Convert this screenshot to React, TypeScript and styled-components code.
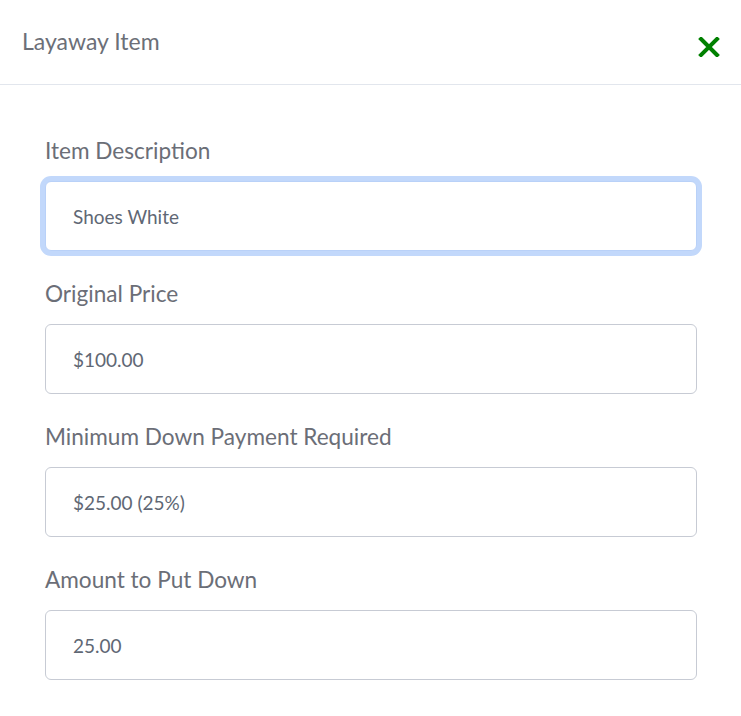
import styled, { createGlobalStyle } from "styled-components";

const GlobalStyle = createGlobalStyle`
  html, body {
    margin: 0;
    padding: 0;
    background: #ffffff;
  }

  * {
    box-sizing: border-box;
  }
`;

const Modal = styled.div`
  width: 741px;
  min-height: 716px;
  background: #ffffff;
  font-family: Lato, "Noto Sans", sans-serif;
`;

const Header = styled.header`
  height: 85px;
  display: flex;
  align-items: center;
  justify-content: space-between;
  padding: 0 20px 0 22px;
  border-bottom: 1px solid #e2e6ed;
`;

const Title = styled.h1`
  margin: 0 0 2px;
  font-size: 23px;
  font-weight: 400;
  color: #6c6f78;
`;

const CloseButton = styled.button`
  display: flex;
  align-items: center;
  justify-content: center;
  width: 24px;
  height: 24px;
  margin-top: 10px;
  padding: 0;
  border: none;
  background: none;
  cursor: pointer;
`;

const Body = styled.form`
  display: flex;
  flex-direction: column;
  gap: 28px;
  padding: 51px 44px 36px 45px;
`;

const Field = styled.div`
  display: flex;
  flex-direction: column;
  gap: 15px;
`;

const Label = styled.label`
  font-size: 22.6px;
  line-height: 30px;
  color: #6b6e77;
`;

const Input = styled.input<{ $focused?: boolean }>`
  width: 100%;
  height: 70px;
  padding: 0 27px;
  font: inherit;
  font-size: 19px;
  color: #606774;
  background: #ffffff;
  border: 1px solid ${(p) => (p.$focused ? "#b9d1f8" : "#c7cbd4")};
  border-radius: 6px;
  box-shadow: ${(p) => (p.$focused ? "0 0 0 5px #c2d8fb" : "none")};
  outline: none;
`;

const fields = [
  { id: "desc", label: "Item Description", value: "Shoes White", focused: true },
  { id: "price", label: "Original Price", value: "$100.00" },
  { id: "min", label: "Minimum Down Payment Required", value: "$25.00 (25%)" },
  { id: "down", label: "Amount to Put Down", value: "25.00" },
];

export default function App() {
  return (
    <>
      <GlobalStyle />
      <Modal>
        <Header>
          <Title>Layaway Item</Title>
          <CloseButton type="button" aria-label="Close">
            <svg width="22" height="20" viewBox="0 0 22 20">
              <path
                d="M3 2 L19 18 M19 2 L3 18"
                stroke="#008000"
                strokeWidth="4"
                strokeLinecap="square"
              />
            </svg>
          </CloseButton>
        </Header>
        <Body>
          {fields.map((f) => (
            <Field key={f.id}>
              <Label htmlFor={f.id}>{f.label}</Label>
              <Input id={f.id} defaultValue={f.value} $focused={f.focused} readOnly />
            </Field>
          ))}
        </Body>
      </Modal>
    </>
  );
}
